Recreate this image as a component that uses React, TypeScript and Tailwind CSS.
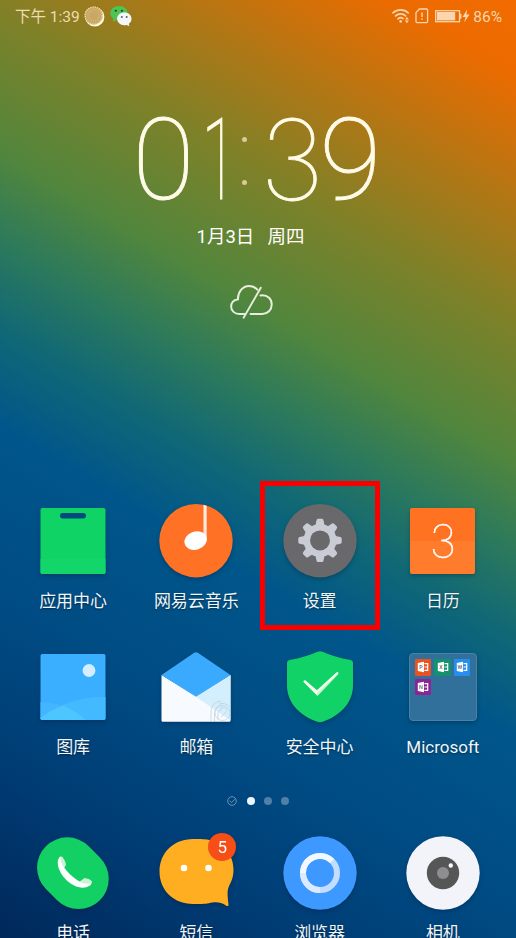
import type { ReactNode } from "react";

function WifiIcon() {
  return (
    <svg width="18" height="16" viewBox="0 0 18 16" fill="none" stroke="#fbd5ae" strokeWidth="1.7" strokeLinecap="round">
      <path d="M1 4.800C5.200.9 12 .9 16.200 4.800" />
      <path d="M3.600 7.900c2.900-2.600 7.200-2.600 10 0" />
      <path d="M6 10.900c1.600-1.400 3.400-1.500 5-.4" />
      <circle cx="8.600" cy="13.400" r="1.300" fill="#fbd5ae" stroke="none" />
      <path d="m12.900 11.600 2-2.600 2 2.600zM12.900 12.600l2 2.600 2-2.600z" fill="#fbd5ae" stroke="none" />
    </svg>
  );
}

function SimIcon() {
  return (
    <svg width="14" height="16" viewBox="0 0 14 16" fill="none" stroke="#fbd5ae" strokeWidth="1.300">
      <path d="M4.400 1h7.200q1 0 1 1v11.600q0 1-1 1H2q-1 0-1-1V4.600z" strokeLinejoin="round" />
      <path d="M7 4.600v4.400M7 10.300v1.500" strokeWidth="1.500" />
    </svg>
  );
}

function BatteryIcon() {
  return (
    <svg width="27" height="13" viewBox="0 0 27 13">
      <rect x=".7" y=".7" width="23.800" height="11" fill="none" stroke="#fbd5ae" strokeWidth="1.300" />
      <rect x="2" y="2" width="18.200" height="8.400" fill="#fbd5ae" />
      <path d="M25.500 3.800v4.800" stroke="#fbd5ae" strokeWidth="1.800" />
    </svg>
  );
}

function StatusBar() {
  return (
    <header className="flex h-8 items-center justify-between pr-[14px] pl-[15px] text-[15px] text-[#f0dcb0]">
      <div className="flex items-center pt-[2px]">
        <span className="w-[69px] text-[15.5px] leading-5 whitespace-nowrap">下午 1:39</span>
        <svg className="-mt-[2px]" width="21" height="21" viewBox="0 0 21 21">
          <circle cx="10.800" cy="10.900" r="9.600" fill="#fff8dc" />
          <circle cx="9.700" cy="9.600" r="9.200" fill="#c9a866" />
          <circle cx="9.700" cy="9.600" r="8.600" fill="none" stroke="#f4e1ad" strokeWidth="1.400" strokeDasharray="1 1.300" />
          <circle cx="9.700" cy="9.600" r="5.500" fill="none" stroke="#d0b373" strokeWidth="2.500" strokeDasharray="1 1" />
        </svg>
        <svg className="-mt-[2px] ml-[5px]" width="22" height="22" viewBox="0 0 22 22">
          <path d="M9 1c5 0 8.600 3.200 8.600 7.200s-3.600 7.200-8.600 7.200q-1.400 0-2.700-.4L2.800 17l.7-3.300Q.3 11.500.3 8.200C.3 4.200 4 1 9 1" fill="#4fc453" />
          <ellipse cx="5.800" cy="5.700" rx="1.200" ry="1" fill="#174d20" />
          <ellipse cx="12" cy="5.700" rx="1.200" ry="1" fill="#174d20" />
          <path d="M14.300 7.600c4.200 0 7.200 2.700 7.200 6.200 0 2.100-1 3.900-2.700 5l.6 2.500-2.700-1.400q-1.100.3-2.400.3c-4.100 0-7.200-2.900-7.200-6.400s3.100-6.200 7.200-6.200" fill="#f5f6fa" />
          <circle cx="11.800" cy="12" r="1" fill="#555e75" />
          <circle cx="16.700" cy="12" r="1" fill="#555e75" />
        </svg>
      </div>
      <div className="flex items-center text-[#fbd5ae]">
        <WifiIcon />
        <span className="ml-[5px] flex"><SimIcon /></span>
        <span className="ml-[6px] flex"><BatteryIcon /></span>
        <svg width="8" height="14" viewBox="0 0 8 14" fill="#fbd5ae"><path d="M5.200.5.500 8h3L2.200 13.500 7.500 5.600H4.400z" /></svg>
        <span className="ml-[3px] pt-[2px] text-[15.500px] leading-5">86%</span>
      </div>
    </header>
  );
}

function Digit({ children, className }: { children: string; className: string }) {
  return <span className={`flex h-full shrink-0 items-center justify-center ${className}`}>{children}</span>;
}

function Clock() {
  return (
    <section className="flex flex-col items-center">
      <div className="mt-[81px] flex h-[96px] w-[516px] items-center pl-[132px] text-[113px] leading-[96px] font-thin text-[#fffbe9]">
        <Digit className="w-[63px] [-webkit-text-stroke:0.9px_#fffbe9]">0</Digit>
        <Digit className="ml-[8px] w-[32px] scale-x-[0.55] [-webkit-text-stroke:1.2px_#fffbe9]">1</Digit>
        <span className="flex w-[19px] flex-col items-center gap-[38px]">
          <i className="size-[5px] rounded-full bg-[#dccb98]" />
          <i className="size-[5px] rounded-full bg-[#dccb98]" />
        </span>
        <Digit className="ml-[6px] w-[64px] pb-[2px] font-['Inter'] text-[111px] [-webkit-text-stroke:0.8px_#fffbe9]">3</Digit>
        <Digit className="ml-px w-[51px] [-webkit-text-stroke:0.900px_#fffbe9]">9</Digit>
      </div>
      <div className="mt-[16px] mr-[15px] flex w-[108px] justify-between text-[18.500px] leading-6 whitespace-nowrap text-white">
        <span>1月3日</span>
        <span>周四</span>
      </div>
      <svg className="mt-[35px] mr-[13px]" width="43" height="36" viewBox="0 0 44 36" fill="none" stroke="#e7efdb" strokeWidth="2" strokeLinecap="round">
        <path d="M15 30.300H9.500C4.700 30.300 1.200 27 1.200 22.800s2.900-7 7-7.500C7.800 7.600 13 1.600 19.500 1.600c3.500 0 6.400 1.300 8.500 3.800" />
        <path d="M21 30.300h12c5.500 0 9.700-4.200 9.700-9.800S38.500 11 33.200 11q-1 0-2 .3" />
        <path d="M31.500 3.400 14 34" />
      </svg>
    </section>
  );
}

function AppStore() {
  return (
    <svg width="74" height="74" viewBox="0 0 74 74">
      <rect x="4.500" y="4" width="65" height="66" rx="1.800" fill="#10d365" />
      <path d="M4.500 55h65v13.200q0 1.800-1.800 1.800H6.300q-1.800 0-1.800-1.800z" fill="#12d669" />
      <rect x="24" y="9" width="26" height="5.500" rx="2.700" fill="#004a7d" />
    </svg>
  );
}

function Music() {
  return (
    <svg width="74" height="74" viewBox="0 0 74 74">
      <circle cx="37" cy="36.700" r="36.700" fill="#ff7226" />
      <path d="M44.500.8q1.700.3 3.200.9V37h-3.200z" fill="#ffe8dc" />
      <ellipse cx="36.600" cy="36.600" rx="11.400" ry="9" transform="rotate(-18 36.600 36.600)" fill="#fff" />
    </svg>
  );
}

function Settings() {
  const teeth = [0, 45, 90, 135, 180, 225, 270, 315];
  return (
    <svg width="74" height="74" viewBox="0 0 74 74">
      <circle cx="37" cy="36.700" r="36.700" fill="#69696b" />
      <g fill="#c9ccd5">
        {teeth.map((a) => (
          <path key={a} d="M30.800 23.500Q33.100 21 33.300 17.200 33.500 14.700 34.800 14.700h4.400q1.300 0 1.500 2.500.2 3.800 2.500 6.300z" transform={`rotate(${a} 37 36.400)`} />
        ))}
        <circle cx="37" cy="36.400" r="16.500" />
      </g>
      <circle cx="37" cy="36.400" r="10" fill="#69696b" />
    </svg>
  );
}

function Calendar() {
  return (
    <div className="flex h-[66px] w-[65px] items-center justify-center rounded-[2px] bg-linear-to-b from-[#ff7222] from-50% to-[#ff7c2d] to-50% text-[46px] leading-none font-thin text-white">
      <span className="font-['Inter'] [-webkit-text-stroke:0.500px_white]">3</span>
    </div>
  );
}

function Gallery() {
  return (
    <svg width="74" height="74" viewBox="0 0 74 74">
      <rect x="4.500" y="4" width="65" height="66" rx="1.800" fill="#3aaeff" />
      <path d="M4.500 52q26 1 45 18H6.300q-1.800 0-1.800-1.800z" fill="#44b5ff" />
      <path d="M4.500 68Q33 46 69.500 47v21.200q0 1.800-1.800 1.800H6.300q-1.800 0-1.800-1.800z" fill="#43baff" />
      <path d="M4.500 68Q14 60 27.500 55.500 40 61 49.500 70H6.300q-1.800 0-1.800-2z" fill="#4dc6ff" />
      <circle cx="53" cy="20.500" r="6.400" fill="#d5eeff" />
    </svg>
  );
}

function Mail() {
  return (
    <svg width="74" height="74" viewBox="0 0 74 74">
      <path d="M2.500 25 37 46l34.500-21v45.500q0 1.200-1.200 1.200H3.700q-1.200 0-1.200-1.200z" fill="#f7faff" />
      <path d="M71.500 25v45.500L37 46.700z" fill="#d3eefc" />
      <path d="M2.500 25 35.200 2.700q1.800-1.100 3.600 0L71.500 25 37 46.700z" fill="#3aaaff" />
      <g fill="none" stroke="#b9ccd6" strokeWidth="1" opacity=".65">
        <path d="M52 71V61q1-9 10-10M55.500 71v-9q1-6 7-7M59 70v-7q1-3 4-4M62 67l6-6M60 54q6-2 11 3M61 58q5-2 8 2" />
        <circle cx="63.500" cy="63" r="7.500" />
      </g>
    </svg>
  );
}

function Security() {
  return (
    <svg width="74" height="74" viewBox="0 0 74 74">
      <path d="M34.500 1.700q2.500-.9 5 0 11.800 5.400 28 8.200 2.500.6 2.500 3.200v22.500C70 53 57 65.500 40.500 71.600q-3.500 1.300-7 0C17 65.500 4 53 4 35.600V13.100q0-2.600 2.500-3.200 16.200-2.800 28-8.200" fill="#11d267" />
      <path d="m34.500 46-.5-6L53.500 22.500l2 1.600z" fill="#c8f6cd" />
      <path d="M20.300 31.800q.5-1.900 2-1.500L34.300 40.500 53.500 22.400q2-1 1.900.9L34.500 42.500V46z" fill="#f4fff0" />
    </svg>
  );
}

const officeApps = [
  { letter: "P", tile: "bg-[#e95321]" },
  { letter: "X", tile: "bg-[#12936e]" },
  { letter: "W", tile: "bg-[#268eed]" },
  { letter: "N", tile: "bg-[#8b2495]" },
];

function Folder() {
  return (
    <div className="grid h-[68px] w-[68px] grid-cols-[16px_16px_16px] content-start gap-x-[3.500px] gap-y-[3px] rounded-[4px] border border-[#4a82a5] bg-[#31709a] pt-[5px] pl-[5px]">
      {officeApps.map((app) => (
        <div key={app.letter} className={`flex size-[16.500px] items-center justify-center rounded-[1px] ${app.tile}`}>
          <svg width="12" height="12" viewBox="0 0 12 12">
            <path d="M.8 2 7 .700v10.600L.8 10z" fill="#fff" />
            <path d="M7.500 2.700h3.200v6.600H7.500M7.500 6h3" fill="none" stroke="#fff" strokeWidth="1.200" />
            <text x="3.900" y="8" textAnchor="middle" fontSize="5.500" fontWeight="700" fill="#777">{app.letter}</text>
          </svg>
        </div>
      ))}
    </div>
  );
}

function Phone() {
  return (
    <svg width="74" height="74" viewBox="0 0 74 74">
      <path d="M31.300 31.600 42.500 42.800" stroke="#13d064" strokeWidth="60.500" strokeLinecap="round" />
      <path d="M23.500 21.500q1.500-1.800 3-.4 2.700 3.500 3.500 7.500l-3.500 7L23 30zM42.500 46.500l6-4.600q5 .6 7.300 3 .8 2-1.400 4.500L46 51z" fill="#c8f3d5" />
      <path d="M25 20.500C19 23 22 35 29 42.500 37 51.500 48 54 53.500 49.500q.8-1 1.200-2.400-5 2-11.200-1.600C35 40.500 28 32.500 25.700 27.500q-1.500-3.800-.7-7" fill="#fff" />
    </svg>
  );
}

function Messages() {
  return (
    <div className="relative h-[74px] w-[74px]">
      <svg width="76" height="76" viewBox="0 0 76 76">
        <path d="M34 3h7c20 0 33.500 13 33.500 30.500 0 9-2.500 12-4.800 17.500-1.600 4-1.300 7.500-.2 17.500q.2 2.200-1.800 1.400C62 66.500 59 66 53.500 66.500 48 67.500 46 68 38 68h-4C14.500 68 .5 54 .5 35.500S14.500 3 34 3" fill="#ffae22" />
        <circle cx="25" cy="32" r="3.300" fill="#fff" />
        <circle cx="49.500" cy="32" r="3.300" fill="#fff" />
      </svg>
      <span className="absolute top-[-3px] left-[49px] flex size-[28px] items-center justify-center rounded-full bg-[#f74d16] text-[17px] leading-none text-white">5</span>
    </div>
  );
}

function Browser() {
  return (
    <svg width="74" height="74" viewBox="0 0 74 74">
      <circle cx="37" cy="37" r="36.700" fill="#3d98ff" />
      <circle cx="37" cy="37" r="17" fill="none" stroke="#c4ddff" strokeWidth="6" />
      <path d="M49 25A17 17 0 0 0 20 37" fill="none" stroke="#f2f8ff" strokeWidth="6" />
      <path d="M20 37A17 17 0 0 0 37 54" fill="none" stroke="#dcebff" strokeWidth="6" />
    </svg>
  );
}

function Camera() {
  return (
    <svg width="74" height="74" viewBox="0 0 74 74">
      <circle cx="37" cy="37" r="36.700" fill="#f3f3fa" />
      <circle cx="37" cy="37" r="16.200" fill="#565657" />
      <circle cx="37" cy="37" r="6" fill="#8e8e91" />
      <circle cx="44.800" cy="29.500" r="2.200" fill="#fff" />
    </svg>
  );
}

function AppTile({ label, children, highlighted }: { label: string; children: ReactNode; highlighted?: boolean }) {
  return (
    <div className="relative flex flex-col items-center">
      <div className="flex h-[74px] items-center justify-center drop-shadow-[0_2px_2px_rgba(0,20,50,0.3)]">{children}</div>
      <span className="mt-[11px] text-[17px] leading-6 whitespace-nowrap text-[#eef5fb] [text-shadow:0_1px_2px_rgba(0,0,0,0.45)]">{label}</span>
      {highlighted && <span className="absolute -top-[23px] left-[2px] h-[149px] w-[120px] border-[5px] border-[#f80000]" />}
    </div>
  );
}

export default function App() {
  return (
    <main
      lang="zh-CN"
      className="flex h-[938px] w-[516px] flex-col overflow-hidden bg-[linear-gradient(211deg,#f26b00_0%,#ec6b00_6%,#bf7410_14%,#7e8128_26%,#51863d_37%,#2d7a5b_44%,#0f6777_51.500%,#00568a_59%,#004b83_73%,#003c74_86%,#00285a_100%)] font-['Roboto','Noto_Sans_CJK_SC',sans-serif]"
    >
      <StatusBar />
      <Clock />
      <div className="mt-auto h-[434px] shrink-0 px-[11.500px]">
        <div className="grid grid-cols-4 gap-y-[37px]">
          <AppTile label="应用中心"><AppStore /></AppTile>
          <AppTile label="网易云音乐"><Music /></AppTile>
          <AppTile label="设置" highlighted><Settings /></AppTile>
          <AppTile label="日历"><Calendar /></AppTile>
          <AppTile label="图库"><Gallery /></AppTile>
          <AppTile label="邮箱"><Mail /></AppTile>
          <AppTile label="安全中心"><Security /></AppTile>
          <AppTile label="Microsoft"><Folder /></AppTile>
        </div>
        <div className="mt-[36px] flex h-3 items-center justify-center">
          <svg width="10" height="10" viewBox="0 0 10 10" fill="none" stroke="#6893b5" strokeWidth="1">
            <circle cx="5" cy="5" r="4.300" />
            <path d="m2.600 4.700 1.900 1.900 3.500-3.500" />
          </svg>
          <i className="ml-[10px] size-2 rounded-full bg-[#edf6ff]" />
          <i className="ml-[9px] size-2 rounded-full bg-[#527fa7]" />
          <i className="ml-[9px] size-2 rounded-full bg-[#527fa7]" />
        </div>
        <div className="mt-[29px] grid grid-cols-4">
          <AppTile label="电话"><Phone /></AppTile>
          <AppTile label="短信"><Messages /></AppTile>
          <AppTile label="浏览器"><Browser /></AppTile>
          <AppTile label="相机"><Camera /></AppTile>
        </div>
      </div>
    </main>
  );
}
